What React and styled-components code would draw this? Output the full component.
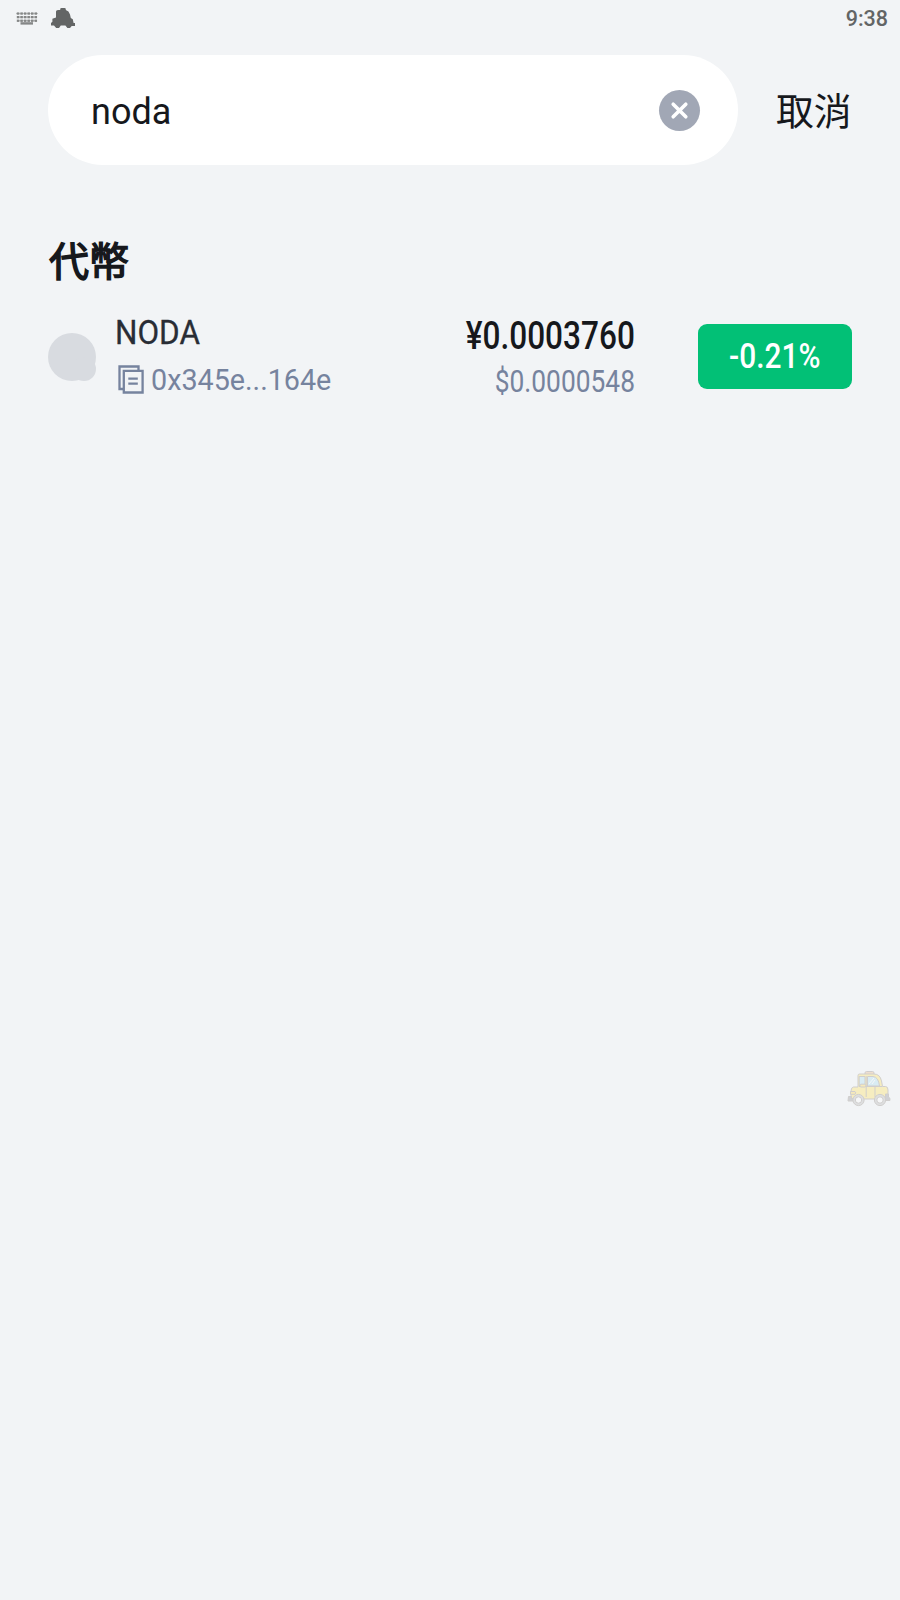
import React from 'react';
import styled, { createGlobalStyle } from 'styled-components';

const GlobalStyle = createGlobalStyle`
  * { box-sizing: border-box; }
  body { margin: 0; background: #f2f4f6; }
`;

const Screen = styled.div`
  position: relative;
  width: 900px;
  height: 1600px;
  overflow: hidden;
  background: #f2f4f6;
  color: #16181c;
  font-family: Roboto, 'Noto Sans CJK TC', sans-serif;
`;

const StatusBar = styled.header`
  display: flex;
  align-items: center;
  height: 37px;
  padding: 0 12px 0 16px;
  color: #636565;
`;

const StatusIcons = styled.div`
  display: flex;
  align-items: center;
  gap: 13px;
  flex: 1;
  padding-bottom: 1px;
  svg { display: block; }
`;

const Clock = styled.time`
  font-size: 21.5px;
  font-weight: 500;
  line-height: 37px;
`;

const SearchRow = styled.div`
  display: flex;
  align-items: center;
  margin-top: 18px;
  padding: 0 48px;
  height: 110px;
`;

const SearchBox = styled.div`
  display: flex;
  align-items: center;
  justify-content: space-between;
  width: 690px;
  height: 110px;
  padding: 0 38px 0 43px;
  border-radius: 55px;
  background: #fff;
`;

const Query = styled.span`
  font-size: 36px;
  line-height: 42px;
  padding-top: 3px;
`;

const ClearButton = styled.button`
  display: flex;
  width: 41px;
  height: 41px;
  padding: 0;
  border: 0;
  border-radius: 50%;
  background: #a1a7b5;
`;

const Cancel = styled.button`
  margin-left: 38px;
  padding: 0 0 3px;
  border: 0;
  background: none;
  color: #16181c;
  font: 400 37.8px/54px 'Noto Sans CJK TC', sans-serif;
  white-space: nowrap;
`;

const SectionTitle = styled.h2`
  margin: 64px 0 0;
  padding-left: 49px;
  font: 400 40px/60px 'Noto Sans CJK TC', sans-serif;
  -webkit-text-stroke: 1.5px #16181c;
`;

const TokenRow = styled.div`
  display: flex;
  align-items: center;
  height: 96px;
  margin-top: 20px;
  padding: 0 48px;
`;

const Avatar = styled.svg`
  display: block;
  flex: none;
  width: 48px;
  height: 48px;
`;

const Identity = styled.div`
  flex: 1;
  padding: 0 0 2px 19px;
`;

const Prices = styled.div`
  display: flex;
  flex-direction: column;
  align-items: flex-end;
  width: 220px;
  margin-right: 63px;
`;

const Label = styled.span`
  display: block;
  width: max-content;
  color: ${(p) => p.$color};
  font-size: ${(p) => p.$size}px;
  font-weight: ${(p) => p.$weight || 400};
  line-height: ${(p) => p.$line}px;
  white-space: nowrap;
  transform: scaleX(${(p) => p.$stretch || 1});
  transform-origin: ${(p) => p.$anchor || 'left'} center;
  -webkit-text-stroke: ${(p) => p.$stroke || 0}px currentColor;
`;

const AddressLine = styled.div`
  display: flex;
  align-items: center;
  height: 48px;
  gap: 7px;
  padding-left: 3px;
  svg { display: block; margin-top: -1px; }
`;

const Change = styled.div`
  display: flex;
  align-items: center;
  justify-content: center;
  width: 154px;
  height: 65px;
  margin-bottom: 2px;
  border-radius: 9px;
  background: #02c076;
`;

const FloatingTaxi = styled.div`
  position: absolute;
  left: 847px;
  top: 1070px;
  opacity: 0.32;
  svg { display: block; }
`;

const KeyboardIcon = () => (
  <svg width="22" height="13" viewBox="0 0 22 13" fill="#858787">
    {[0, 3.6, 7.2].map((y, r) =>
      [0, 1, 2, 3, 4, 5].map((i) => (
        <rect key={`${r}-${i}`} x={0.8 + i * 3.55} y={y + 0.4} width="2.5" height="2.3" />
      ))
    )}
    <path d="M0 .9h22v1.2H0zM1 4.5h20v1.2H1zM2 8.1h18v1.2H2z" opacity=".45" />
    <rect x="4.5" y="10.2" width="12.5" height="2.4" />
  </svg>
);

const CarSilhouette = () => (
  <svg width="24" height="20" viewBox="0 0 24 20" fill="#636565">
    <path d="M5 3.5Q5 2 7 2h2.2V1.2Q9.2 0 10.5 0h3Q14.8 0 14.8 1.2v.9Q18 3 19 6.5l.8 3.5 2 1.2L22.6 15H24v3h-3.3L19 20h-2.6l-2-2.6h-4.6L8 20H5.2L3 17.5H0V15l1.4-1.2v-3L5 9.5z" />
  </svg>
);

const CopyIcon = () => (
  <svg width="26" height="29" viewBox="0 0 26 29" fill="none" stroke="#76839e" strokeWidth="2.3">
    <path d="M5 24H1.5V1.5h19V5" />
    <path d="M5.8 5.8h18.8v21.7H5.8z" />
    <path d="M10.3 13.7h9.5M10.3 18.7h9.5" />
  </svg>
);

const TaxiIcon = () => (
  <svg width="44" height="37" viewBox="0 0 44 37" stroke="#8b8178" strokeWidth="1" strokeLinejoin="round">
    <rect x="18" y="1.5" width="9" height="4" rx="1.5" fill="#e9b27b" />
    <path d="M11 17V5.5Q11 4 12.5 4H27q6 0 7.5 7l1 5.5h3q2.5 0 2.5 3.5v9H4v-8q0-3.5 2.5-4z" fill="#ffe052" />
    <path d="M12.2 6.5H18V16h-5.8z" fill="#a5ddef" />
    <path d="M20.5 16V6.5H26Q31.5 7 32.5 16z" fill="#a5ddef" />
    <path d="M19.2 6v21M12 16.5h23M28 17v10" fill="none" />
    <path d="M22 14l5-6M25 14l3-4" stroke="#fff" />
    <path d="M3.5 21.5h4.5q1.5 1.4 0 2.8H3.5z" fill="#ffd33d" />
    <rect x="13" y="14.2" width="5.8" height="2.8" rx="1" fill="#ffd33d" />
    <path d="M1.5 26.5h3v2h3v2.5H1zM38.5 24h3v3l1.4 1.2v2.3h-4.4z" fill="#8b8b90" />
    <circle cx="11.5" cy="30" r="5.6" fill="#b5b5b5" />
    <circle cx="11.5" cy="30" r="3.2" fill="#fff" />
    <circle cx="33" cy="30" r="5.6" fill="#b5b5b5" />
    <circle cx="33" cy="30" r="3.2" fill="#fff" />
  </svg>
);

export default function App() {
  return (
    <Screen>
      <GlobalStyle />
      <StatusBar>
        <StatusIcons>
          <KeyboardIcon />
          <CarSilhouette />
        </StatusIcons>
        <Clock>9:38</Clock>
      </StatusBar>
      <SearchRow>
        <SearchBox>
          <Query>noda</Query>
          <ClearButton aria-label="清除">
            <svg width="41" height="41" viewBox="0 0 41 41" stroke="#fff" strokeWidth="3.6" strokeLinecap="round">
              <path d="M14.2 14.2l12.6 12.6M26.8 14.2L14.2 26.8" />
            </svg>
          </ClearButton>
        </SearchBox>
        <Cancel>取消</Cancel>
      </SearchRow>
      <SectionTitle>代幣</SectionTitle>
      <TokenRow>
        <Avatar viewBox="0 0 48 48" fill="#d8dbe0">
          <circle cx="24" cy="24" r="24" />
          <circle cx="36" cy="36" r="12" />
        </Avatar>
        <Identity>
          <Label $color="#292d35" $size={34} $line={48} $stretch={0.925} $stroke={0.3}>NODA</Label>
          <AddressLine>
            <CopyIcon />
            <Label $color="#76839e" $size={29} $line={48} $stretch={0.99}>0x345e...164e</Label>
          </AddressLine>
        </Identity>
        <Prices>
          <Label $color="#16181c" $size={39} $weight={500} $line={50} $stretch={0.81} $anchor="right">¥0.0003760</Label>
          <Label $color="#76839e" $size={31} $line={42} $stretch={0.85} $anchor="right">$0.0000548</Label>
        </Prices>
        <Change>
          <Label $color="#fff" $size={34.5} $weight={500} $line={48} $stretch={0.865} $anchor="center">-0.21%</Label>
        </Change>
      </TokenRow>
      <FloatingTaxi><TaxiIcon /></FloatingTaxi>
    </Screen>
  );
}
